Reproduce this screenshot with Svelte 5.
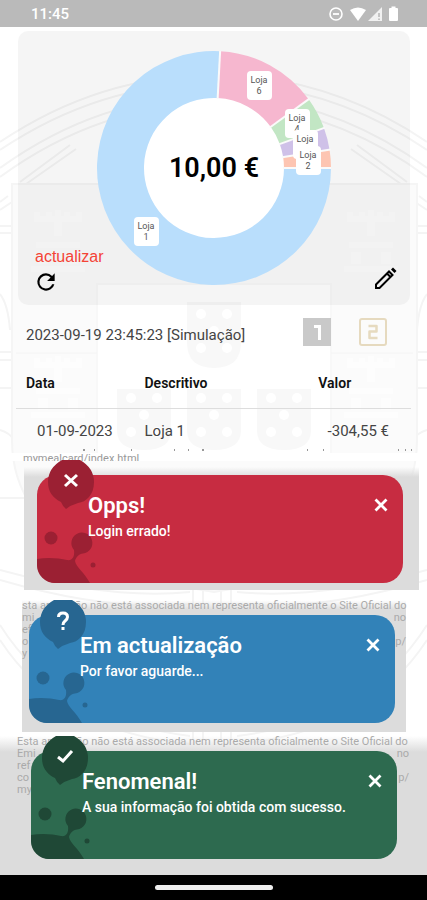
<script lang="ts">
  type Slice = { from: number; to: number; color: string };
  type Tag = { x: number; y: number; no: string };

  // Angles in degrees, clockwise from the top of the ring
  const slices: Slice[] = [
    { from: 90, to: 363, color: '#b9defc' },
    { from: 3, to: 54, color: '#f6b7cf' },
    { from: 54, to: 70, color: '#c2e6c4' },
    { from: 70, to: 81, color: '#cfc1e8' },
    { from: 81, to: 90, color: '#fdc5b2' },
  ];

  const tags: Tag[] = [
    { x: 162, y: 35, no: '6' },
    { x: 200, y: 73, no: '4' },
    { x: 208, y: 94, no: '' },
    { x: 211, y: 110, no: '2' },
    { x: 49, y: 181, no: '1' },
  ];

  const rows = [{ date: '01-09-2023', text: 'Loja 1', value: '-304,55 €' }];

  const notice = 'aplicação não está associada nem representa oficialmente o Site Oficial do';

  let toasts = $state([
    {
      kind: 'error',
      title: 'Opps!',
      message: 'Login errado!',
      lines: [],
    },
    {
      kind: 'help',
      title: 'Em actualização',
      message: 'Por favor aguarde...',
      lines: [['sta ' + notice, ''], ['mi', 'no'], ['ef', ''], ['o', 'p/'], ['y', '']],
    },
    {
      kind: 'success',
      title: 'Fenomenal!',
      message: 'A sua informação foi obtida com sucesso.',
      lines: [['Esta ' + notice, ''], ['Emi', 'no'], ['ref', ''], ['co', 'p/'], ['my', '']],
    },
  ]);

  function point(angle: number, radius: number) {
    const a = ((angle - 90) * Math.PI) / 180;
    return `${(117 + radius * Math.cos(a)).toFixed(2)} ${(117 + radius * Math.sin(a)).toFixed(2)}`;
  }

  function ring({ from, to }: Slice) {
    const large = to - from > 180 ? 1 : 0;
    return `M${point(from, 117)} A117 117 0 ${large} 1 ${point(to, 117)} L${point(to, 70)} A70 70 0 ${large} 0 ${point(from, 70)}Z`;
  }

  function dismiss(kind: string) {
    toasts = toasts.filter((t) => t.kind !== kind);
  }
</script>

{#snippet cross(size: number)}
  <svg width={size} height={size} viewBox="0 0 14 14" aria-hidden="true">
    <path d="M1.500 1.500 12.500 12.500M12.500 1.500 1.500 12.500" fill="none" stroke="#fff" stroke-width="2.800" />
  </svg>
{/snippet}

<div class="screen">
  <svg class="watermark" viewBox="0 0 427 900" preserveAspectRatio="xMidYMin slice" aria-hidden="true">
    <path d="M12 177H417V440Q417 560 214 592Q12 560 12 440Z" fill="#fff" />
    <g fill="none" stroke="#f4f4f4" stroke-width="2">
      <path d="M0 142Q100 75 214 75T427 142" />
      <path d="M0 150Q100 83 214 83T427 150" />
      <path d="M0 168Q100 96 214 96T427 168" />
      <path d="M0 177Q100 104 214 104T427 177" />
      <path d="M0 202 8 196M0 210 12 202M427 202 419 196M427 210 415 202M20 182 70 145M26 184 76 149M407 182 357 145M401 184 351 149" />
      <path d="M0 226H12M0 233H12M417 226H427M417 233H427M0 352H12M0 360H12M417 352H427M417 360H427M0 388H12M417 388H427" />
      <path d="M0 294Q8 304 10 330M427 294Q419 304 417 330M0 430Q10 433 14 440M427 430Q417 433 413 440" />
      <path d="M0 498H24M0 570Q110 600 190 592M0 580Q110 612 190 604M427 570Q317 600 237 592M427 580Q317 612 237 604" />
      <path d="M0 625Q60 720 190 736M427 625Q367 720 237 736M0 640Q60 732 190 744M427 640Q367 732 237 744M193 590V740M203 590V740M221 590V740M231 590V740" />
    </g>
    <path d="M12 184H417V440Q417 560 214 592Q12 560 12 440Z" fill="#fbfbfb" stroke="#f5f5f5" stroke-width="2" />
    <path d="M97 284H331V460H97Z" fill="#fff" stroke="#f8f8f8" stroke-width="2" />
    <path d="M16 353H97M331 353H413" stroke="#f4f4f4" />
    <g fill="#f8f8f8">
      <path d="M187 302H241V342Q241 368 214 368Q187 368 187 342Z" />
      <path d="M117 389H171V430Q171 450 144 450Q117 450 117 430Z" />
      <path d="M187 389H241V430Q241 450 214 450Q187 450 187 430Z" />
      <path d="M257 389H311V430Q311 450 284 450Q257 450 257 430Z" />
    </g>
    <g fill="#fff">
      {#each [[214, 314], [144, 398], [214, 398], [284, 398]] as [x, y]}
        <circle cx={x - 13} cy={y} r="5" />
        <circle cx={x + 13} cy={y} r="5" />
        <circle cx={x} cy={y + 17} r="5" />
        <circle cx={x - 13} cy={y + 34} r="5" />
        <circle cx={x + 13} cy={y + 34} r="5" />
      {/each}
    </g>
    <g fill="#fdfdfd">
      {#each [[58, 212], [371, 212], [58, 358], [371, 358]] as [x, y]}
        <path d="M{x - 24} {y}h6v4h6v-4h6v4h3v-6h6v6h3v-4h6v4h6v-4h6v10h-48zM{x - 4} {y + 10}h8v14h-8zM{x - 22} {y + 30}h44v6h-44zM{x - 20} {y + 40}h10v12h-10zM{x + 10} {y + 40}h10v12h-10zM{x - 27} {y + 54}h54v6h-54z" />
      {/each}
    </g>
    <path d="M83 450h2M94 450h1M131 450h1M174 450h1M188 450h1M202 450h2M307 450h1M323 450h1M398 450h1M405 450h1M411 450h1" stroke="#999" stroke-width="2" />
  </svg>

  <header class="status">
    <span>11:45</span>
    <svg width="70" height="16" viewBox="0 0 70 16" aria-hidden="true">
      <circle cx="8" cy="8" r="6" fill="none" stroke="#fff" stroke-width="1.600" />
      <path d="M5 8h6" stroke="#fff" stroke-width="1.800" />
      <path d="M22 4Q30 -1 38 4L30 15Z" fill="#fff" />
      <path d="M40 15 54 1V15Z" fill="#fff" opacity=".8" />
      <path d="M51 7v4M51 12.500v1.500" stroke="#bababa" stroke-width="1.600" />
      <path d="M70 3v11q0 1-1 1h-7q-1 0-1-1V3q0-1 1-1h1.500V.5h4V2H69q1 0 1 1Z" fill="#fff" />
    </svg>
  </header>

  <main>
    <section class="card">
      <svg class="chart" width="234" height="234" viewBox="0 0 234 234" role="img" aria-label="Saldo por loja">
        <circle cx="117" cy="117" r="71" fill="#fff" />
        {#each slices as slice}
          <path d={ring(slice)} fill={slice.color} />
        {/each}
        {#each slices as slice}
          <path d="M{point(slice.from, 69)} L{point(slice.from, 118)}" stroke="#fafafa" stroke-width="2" />
        {/each}
        <text class="total" x="117" y="126">10,00 €</text>
        {#each tags as tag}
          <g class="tag">
            <rect x={tag.x - 12} y={tag.y - 15} width="25" height="29" rx="4" />
            <text x={tag.x} y={tag.y - 3}>Loja</text>
            {#if tag.no}
              <text x={tag.x} y={tag.y + 8}>{tag.no}</text>
            {/if}
          </g>
        {/each}
      </svg>

      <div class="actions">
        <button class="refresh">
          <span>actualizar</span>
          <svg width="26" height="26" viewBox="0 0 24 24" aria-hidden="true">
            <path d="M17.650 6.350A7.960 7.960 0 0 0 12 4a8 8 0 1 0 7.730 10h-2.080A6 6 0 1 1 12 6c1.660 0 3.140.69 4.220 1.780L13 11h7V4z" />
          </svg>
        </button>
        <button aria-label="Editar">
          <svg width="26" height="30" viewBox="0 0 26 30" aria-hidden="true">
            <path d="M4 23v-3.500L17 6.500l3.500 3.500-13 13zM15 8.500 18.500 12" fill="none" stroke="#000" stroke-width="2" />
            <path d="M19 4.500 21 2.500 24.500 6 22.500 8z" />
          </svg>
        </button>
      </div>
    </section>

    <div class="stamp">
      <span>2023-09-19 23:45:23 [Simulação]</span>
      <button aria-label="Cartão 1">
        <svg width="28" height="28" viewBox="0 0 28 28" aria-hidden="true">
          <path d="M0 0H28V28H0Z" fill="#c9c9c9" />
          <path d="M11 8.500H16.500V22" fill="none" stroke="#fff" stroke-width="3" />
        </svg>
      </button>
      <button aria-label="Cartão 2">
        <svg width="28" height="28" viewBox="0 0 28 28" aria-hidden="true">
          <rect x="1" y="1" width="26" height="26" rx="2" fill="none" stroke="#e6dabf" stroke-width="2" />
          <path d="M9.500 8H17.500V13.500H10.500V20H18.500" fill="none" stroke="#e6dabf" stroke-width="2.500" stroke-linejoin="round" />
        </svg>
      </button>
    </div>

    <table>
      <thead>
        <tr><th>Data</th><th>Descritivo</th><th>Valor</th></tr>
      </thead>
      <tbody>
        {#each rows as row}
          <tr><td>{row.date}</td><td>{row.text}</td><td>{row.value}</td></tr>
        {/each}
      </tbody>
    </table>
    <p class="link">mymealcard/index.html</p>

    {#each toasts as toast (toast.kind)}
      <section class="strip {toast.kind}">
        {#if toast.lines.length}
          <div class="notice">
            {#each toast.lines as [start, end]}
              <p><span>{start}</span><span>{end}</span></p>
            {/each}
          </div>
        {/if}
        <div class="toast" role="status">
          <svg class="splash" width="70" height="123" viewBox="0 -15 70 123" aria-hidden="true">
            <g class="shade">
              <path d="M25-15H43Q57-7 57 7C57 20 49 27 41 28Q34 30 29 34Q26 32 24 27C16 23 11 17 11 7Q11-7 25-15Z" />
              <circle cx="14" cy="63" r="6.500" />
              <circle cx="56" cy="90" r="2.500" />
              <path d="M0 84C10 82 22 83 30 85C35 86 38 82 37 75A10.500 10.500 0 1 1 46 78.500C42 79 39 82 38 86C39 92 47 97 53 108H18A18 18 0 0 1 0 90Z" />
            </g>
            {#if toast.kind === 'error'}
              <path class="mark" d="M28 0 40 11M40 0 28 11" />
            {:else if toast.kind === 'help'}
              <path class="mark" d="M29.500 2Q29.500-2 34-2Q38.500-2 38.500 2Q38.500 4 36 6Q34 7.500 34 10M34 12V15" />
            {:else}
              <path class="mark" d="M27 6 32 10 41 0" />
            {/if}
          </svg>
          <div class="body">
            <h2>{toast.title}</h2>
            <p>{toast.message}</p>
          </div>
          <button aria-label="Fechar" onclick={() => dismiss(toast.kind)}>{@render cross(14)}</button>
        </div>
      </section>
    {/each}
  </main>

  <footer><span></span></footer>
</div>

<style>
  :global(body) {
    margin: 0;
    background: #fff;
  }
  .screen {
    position: relative;
    display: flex;
    flex-direction: column;
    min-height: 100vh;
    overflow: hidden;
    font-family: Roboto, sans-serif;
    color: #444;
  }
  .watermark {
    position: absolute;
    inset: 0;
    width: 100%;
    height: 100%;
  }
  .status,
  main,
  footer {
    position: relative;
  }
  main {
    flex: 1;
    display: flex;
    flex-direction: column;
  }
  button {
    display: flex;
    padding: 0;
    border: 0;
    background: none;
    font: inherit;
    cursor: pointer;
  }
  h2,
  p {
    margin: 0;
  }

  .status {
    display: flex;
    align-items: center;
    justify-content: space-between;
    height: 27px;
    padding: 0 29px 0 31px;
    background: #bababa;
    color: #fff;
    font-size: 15px;
    font-weight: 500;
  }

  .card {
    display: grid;
    margin: 4px 17px 0 18px;
    border-radius: 10px;
    background: rgba(0, 0, 0, 0.04);
  }
  .chart,
  .actions {
    grid-area: 1 / 1;
  }
  .chart {
    justify-self: center;
    margin: 20px 0;
  }
  .total {
    font-size: 27px;
    font-weight: 600;
    fill: #000;
    text-anchor: middle;
  }
  .tag rect {
    fill: #fff;
  }
  .tag text {
    font-size: 9px;
    fill: #555;
    text-anchor: middle;
  }
  .actions {
    display: flex;
    align-items: flex-end;
    justify-content: space-between;
    align-self: end;
    padding: 0 12px 10px 15px;
  }
  .refresh {
    flex-direction: column;
    gap: 3px;
    color: #f44336;
    font-family: 'Liberation Sans', sans-serif;
    font-size: 16px;
  }
  .refresh span {
    padding-left: 2px;
  }

  .stamp {
    display: flex;
    align-items: center;
    gap: 28px;
    height: 54px;
    padding: 0 40px 0 26px;
    font-size: 15px;
  }
  .stamp span {
    flex: 1;
    padding-top: 6px;
    white-space: nowrap;
  }

  table {
    width: calc(100% - 32px);
    margin: 0 16px;
    border-collapse: collapse;
    table-layout: fixed;
  }
  th {
    box-sizing: border-box;
    height: 49px;
    padding: 0 0 0 10px;
    border-bottom: 1px solid #ddd;
    color: #111;
    font-size: 14px;
    font-weight: 600;
    text-align: left;
  }
  th:first-child {
    width: 30%;
  }
  th:last-child {
    width: 26%;
  }
  td {
    height: 44px;
    padding: 0 0 0 10px;
    font-size: 15px;
  }
  td:first-child {
    padding-left: 21px;
  }
  td:last-child {
    padding: 0 22px 0 0;
    text-align: right;
  }
  .link {
    height: 8px;
    overflow: hidden;
    padding-left: 23px;
    background: #fff;
    color: #999;
    font-size: 11px;
    line-height: 12px;
  }

  .strip {
    display: grid;
    background: linear-gradient(rgba(220, 220, 220, 0), #dcdcdc 10px);
  }
  .error {
    --main: #c72c41;
    --dark: #9b2033;
    margin: 6px 8px 0 24px;
    padding: 8px 16px 7px 13px;
  }
  .help {
    --main: #3282b8;
    --dark: #276691;
    margin: 10px 21px 0 22px;
    padding: 15px 11px 9px 7px;
  }
  .success {
    --main: #2d6a4f;
    --dark: #1f4836;
    flex: 1;
    margin-top: 4px;
    padding: 15px 30px 16px 31px;
    background: linear-gradient(rgba(220, 220, 220, 0), #dcdcdc 16px);
  }
  .notice,
  .toast {
    grid-area: 1 / 1;
  }
  .notice {
    min-width: 0;
    margin: -15px -11px 0 -7px;
    color: #aaa;
    font-size: 11px;
    line-height: 12px;
  }
  .success .notice {
    margin: -15px -12px 0 -14px;
  }
  .notice p {
    display: flex;
    justify-content: space-between;
    white-space: nowrap;
  }
  .toast {
    position: relative;
    display: flex;
    align-items: flex-start;
    align-self: start;
    min-height: 108px;
    border-radius: 20px;
    background: var(--main);
    color: #fff;
  }
  .splash {
    position: absolute;
    bottom: 0;
    left: 0;
  }
  .shade {
    fill: var(--dark);
  }
  .mark {
    fill: none;
    stroke: #fff;
    stroke-width: 3;
  }
  .body {
    position: relative;
    flex: 1;
    padding: 18px 0 0 51px;
  }
  h2 {
    font-size: 22px;
    font-weight: 600;
    line-height: 26px;
  }
  .body p {
    padding-top: 3px;
    font-size: 14px;
    font-weight: 500;
    line-height: 18px;
    white-space: nowrap;
  }
  .toast button {
    margin: 23px 15px 0 0;
  }

  footer {
    display: flex;
    align-items: center;
    justify-content: center;
    height: 25px;
    background: #000;
  }
  footer span {
    width: 118px;
    height: 5px;
    border-radius: 3px;
    background: #eee;
  }
</style>
